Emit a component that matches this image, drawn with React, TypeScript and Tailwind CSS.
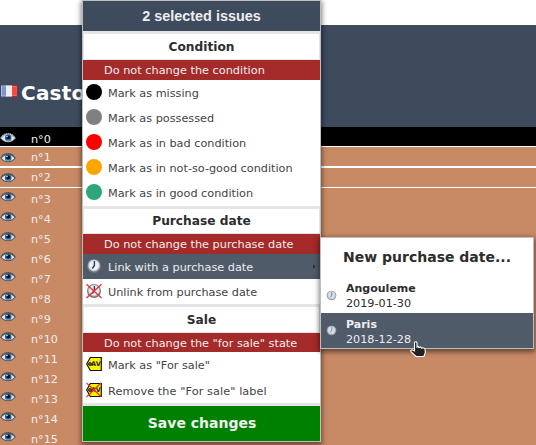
import React from "react";

function Eye({ dark = false }: { dark?: boolean }) {
  return (
    <svg width="16" height="12" viewBox="0 0 16 12" className="block">
      <path d="M0.1 6Q3.2 1.4 8 1.4T15.9 6Q12.5 10.2 8 10.2T0.1 6Z" fill={dark ? "#a9b2b6" : "#4c585c"} />
      <path d="M1.6 6Q4.2 3 8 3T14.4 6Q11.8 9.2 8 9.2T1.6 6Z" fill="#e9eced" />
      <circle cx="8.2" cy="5.9" r="3.3" fill="#2f639b" />
      <circle cx="8.2" cy="5.4" r="1.9" fill="#071322" />
      <path d="M6 8q2 1.3 4 0" stroke="#68a4d4" strokeWidth="0.9" fill="none" />
      <circle cx="7" cy="4.5" r="0.8" fill="#dcecf8" />
      <path d="M2 3.6Q8-0.6 14 3.6" stroke={dark ? "#c9d0d2" : "#344146"} strokeWidth="0.9" fill="none" strokeDasharray="1.3 0.8" />
    </svg>
  );
}

function Clock({ size = 16, crossed = false, faded = false }: { size?: number; crossed?: boolean; faded?: boolean }) {
  return (
    <svg width={size} height={size} viewBox="0 0 16 16" className="block">
      <circle cx="8" cy="8" r="7" fill={faded ? "#9b9b9b" : "#777"} />
      <circle cx="8" cy="7.6" r="6" fill="#bcbcbc" />
      <circle cx="8" cy="7.5" r="4.9" fill={faded ? "#d8dee8" : "#edf1f5"} />
      <path d="M8.4 3V7.5L6.3 10.5" stroke={faded ? "#6487bc" : "#163f7b"} strokeWidth="1.4" fill="none" />
      {crossed && <path d="M0.5 1.3L15.5 15M15.5 1.3L0.5 15" stroke="#f22828" strokeWidth="1.2" />}
    </svg>
  );
}

function SaleTag({ crossed = false }: { crossed?: boolean }) {
  return (
    <svg width="16" height="16" viewBox="0 0 16 16" className="block">
      <path d="M4.3 1.5H15.3V14.5H4.3L0.7 8Z" fill="#fff200" stroke="#111" strokeWidth="1.2" />
      <circle cx="4" cy="8" r="1.5" fill="#6d6900" stroke="#111" strokeWidth="0.8" />
      <text x="5.1" y="10.4" fontSize="6.5" fontWeight="700" fontFamily="DejaVu Sans, sans-serif" textLength="9.6" lengthAdjust="spacingAndGlyphs" fill="#222">AV</text>
      {crossed && <path d="M0.5 1L15 14.5M15 1L0.5 15" stroke="#ef3131" strokeWidth="1.1" />}
    </svg>
  );
}

function Dot({ color }: { color: string }) {
  return <span className="block size-4 rounded-full" style={{ backgroundColor: color }} />;
}

function Section({ title, className }: { title: string; className: string }) {
  return (
    <div className={`border-[#e5e5e5] border-t-[3px] border-b border-x flex items-center justify-center text-[12.2px] font-bold text-[#2d2d2d] ${className}`}>
      {title}
    </div>
  );
}

function Keep({ children, className = "h-5" }: { children: React.ReactNode; className?: string }) {
  return <div className={`flex items-center bg-[#a52a2a] pl-[21px] pt-[2px] text-[11.3px] text-[#eee] ${className}`}>{children}</div>;
}

function Item({ icon, children, className = "h-[25px]" }: { icon: React.ReactNode; children: React.ReactNode; className?: string }) {
  return (
    <div className={`flex items-center pl-[3px] text-[11.25px] text-[#444] ${className}`}>
      <span className="mb-[2px] mr-[6px]">{icon}</span>
      <span className="pt-[2px]">{children}</span>
    </div>
  );
}

const conditions = [
  ["#000000", "Mark as missing"],
  ["#808080", "Mark as possessed"],
  ["#ff0000", "Mark as in bad condition"],
  ["#ffa500", "Mark as in not-so-good condition"],
  ["#2ca77b", "Mark as in good condition"],
];

function IssueList() {
  return (
    <div className="text-[11.2px] text-[#eee]">
      {Array.from({ length: 16 }, (_, i) => (
        <div
          key={i}
          className={`flex ${
            i === 0
              ? "h-[20px] border-b border-white bg-black pt-[5px]"
              : i === 1
                ? "h-[21px] border-b-2 border-white pt-[5px]"
                : i === 2
                  ? "h-[20px] border-b border-white pt-[4px]"
                  : "h-5 pt-[3px]"
          }`}
        >
          <span className="w-[31px] shrink-0"><Eye dark={i === 0} /></span>
          <span className={`leading-3 ${i === 0 ? "pt-[2px]" : i > 2 ? "pt-[3px]" : ""}`}>n°{i}</span>
        </div>
      ))}
    </div>
  );
}

export default function App() {
  return (
    <div className="relative h-[445px] w-[536px] overflow-hidden bg-white pt-[25px] font-['DejaVu_Sans',sans-serif] leading-none">
      <header className="flex h-[102px] items-center bg-[#3d4b5d] pt-[34px]">
        <svg width="17" height="12" viewBox="0 0 17 12" className="mb-[5px] ml-px mr-[3px] block">
          <path d="M0 .5H6V11.5H0Z" fill="#7e95d2" />
          <path d="M5 .5H11V11.5H5Z" fill="#eee" />
          <path d="M11 .5H16V11.5H11Z" fill="#f24b43" />
          <path d="M.5 1H15.5V11H.5Z" stroke="#fff" strokeOpacity=".35" fill="none" />
          <path d="M11 .5H16V11.5H11" stroke="#d91d1d" fill="none" />
        </svg>
        <h1 className="text-[20px] font-bold tracking-[0.2px] text-white">Castor</h1>
      </header>
      <main className="h-[318px] overflow-hidden bg-[#c88965]"><IssueList /></main>

      <div className="absolute left-[82px] top-0 h-[442px] w-[239px] border border-[#bebebe] bg-white shadow-[0_2px_5px_1px_rgba(0,0,0,0.5)]">
        <div className="flex h-[30px] items-center justify-center bg-[#3d4b5d] font-['Liberation_Sans',sans-serif] text-[14.4px] font-bold text-[#eee]">2 selected issues</div>
        <Section title="Condition" className="h-[29px] pt-px" />
        <Keep>Do not change the condition</Keep>
        {conditions.map(([color, label]) => (
          <Item key={label} icon={<Dot color={color} />}>{label}</Item>
        ))}
        <Section title="Purchase date" className="mt-px h-[28px]" />
        <Keep>Do not change the purchase date</Keep>
        <div className="flex bg-[#4f5b69]">
          <Item icon={<Clock />} className="h-[25px] grow text-[#eee]!">Link with a purchase date</Item>
          <svg width="3" height="5" viewBox="0 0 3 5" className="mr-[4px] mt-[10px]"><path d="M0 0L2.5 2.5L0 5Z" fill="#2d3338" /></svg>
        </div>
        <Item icon={<Clock crossed />}>Unlink from purchase date</Item>
        <Section title="Sale" className="h-[29px] pt-px" />
        <Keep className="h-[19px]">Do not change the "for sale" state</Keep>
        <Item icon={<SaleTag />} className="h-[25px]">Mark as "For sale"</Item>
        <Item icon={<SaleTag crossed />} className="h-[26px] pt-px tracking-[0.09px]">Remove the "For sale" label</Item>
        <div className="flex h-[38px] items-center justify-center border-t-[3px] border-[#e5e5e5] bg-[#008000] pb-[2px] pl-px text-[14px] font-bold text-[#eee]">Save changes</div>
      </div>

      <div className="absolute left-[320px] top-[237px] h-[112px] w-[214px] border border-[#bebebe] bg-white shadow-[0_2px_5px_1px_rgba(0,0,0,0.5)]">
        <div className="flex h-[39px] items-center justify-center pb-[2px] text-[14px] font-bold text-[#2d2d2d]">New purchase date...</div>
        <div className="flex h-[36px] items-center pl-[5px] text-[11.2px] leading-[15px] text-[#2d2d2d]">
          <span className="mr-[9px]"><Clock size={11} faded /></span>
          <div className="pt-[2px]"><b className="text-[11px]">Angouleme</b><br />2019-01-30</div>
        </div>
        <div className="flex h-[35px] items-center bg-[#4f5b69] pl-[5px] text-[11.2px] leading-[15px] text-[#eee]">
          <span className="mr-[9px]"><Clock size={11} faded /></span>
          <div className="pt-[2px]"><b className="text-[11px]">Paris</b><br />2018-12-28</div>
        </div>
      </div>

      <svg width="17" height="17" viewBox="0 0 17 17" className="absolute left-[410px] top-[341px]">
        <path d="M4.5 1.2Q6.5 0 7 2V6L8 5.5L9 6.5L10.5 6L11.5 7.2L13 6.8Q15.2 7.2 15.2 9V12L13.8 15.5H6L1.2 11Q0 9.2 2 8.8L4.5 10Z" fill="#222" stroke="#fff" strokeWidth="1.1" />
      </svg>
    </div>
  );
}
